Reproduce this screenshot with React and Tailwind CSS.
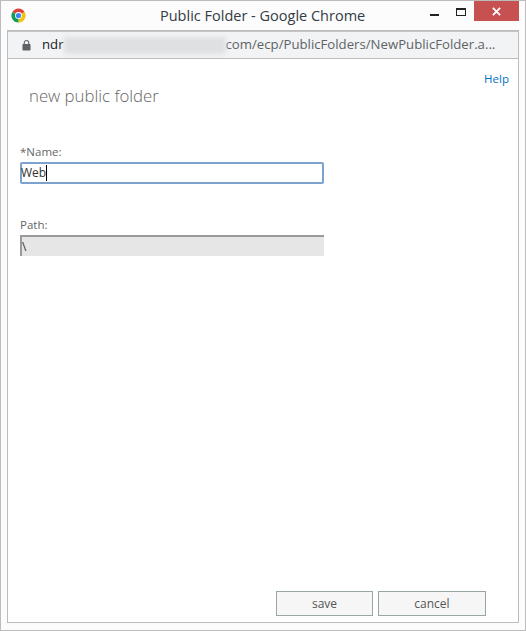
export default function App() {
  return (
    <div className="w-[526px] h-[631px] border border-[#bcbcbc] bg-[#fcfcfc] flex flex-col font-['Open_Sans',sans-serif] overflow-hidden">
      {/* title bar */}
      <div className="h-[29px] flex items-start shrink-0">
        <svg viewBox="0 0 16 16" className="w-[15px] h-[15px] ml-[10px] mt-[7px] shrink-0">
          <path d="M8 8 L1.5 4.2 A7.5 7.5 0 0 1 14.5 4.2 Z" fill="#db4437" />
          <path d="M8 8 L14.5 4.2 A7.5 7.5 0 0 1 8 15.5 Z" fill="#f4c20d" />
          <path d="M8 8 L8 15.5 A7.5 7.5 0 0 1 1.5 4.2 Z" fill="#0f9d58" />
          <circle cx="8" cy="8" r="3.7" fill="#ffffff" />
          <circle cx="8" cy="8" r="2.8" fill="#4285f4" />
        </svg>
        <div className="flex-1 text-[14.5px] leading-[20px] mt-[5px] ml-[134px] text-[#333b44] whitespace-nowrap">Public Folder - Google Chrome</div>
        <div className="w-[9px] h-[2px] bg-[#222] mt-[13px] mr-[17px] shrink-0"></div>
        <div className="w-[10px] h-[8px] border border-[#222] border-t-2 mt-[7px] mr-[8px] shrink-0"></div>
        <div className="w-[45px] h-[20px] bg-[#c75050] mr-[6px] flex items-center justify-center shrink-0">
          <svg viewBox="0 0 10 10" className="w-[9px] h-[9px]">
            <path d="M1 1 L9 9 M9 1 L1 9" stroke="#ffffff" strokeWidth="2" />
          </svg>
        </div>
      </div>

      {/* window body */}
      <div className="ml-[6px] mr-[6px] mb-[7px] flex-1 border border-[#bdbdbd] bg-white flex flex-col">
        {/* address bar */}
        <div className="h-[28px] bg-[#f1f3f4] border-b border-[#bdbdbd] border-t border-t-[#c4c4c4] flex items-center shrink-0 text-[13.2px] whitespace-nowrap overflow-hidden">
          <svg viewBox="0 0 10 12" className="w-[9px] h-[12px] ml-[14px] mr-[11px] shrink-0">
            <path d="M2.5 5.5 V3.5 A2.5 2.5 0 0 1 7.5 3.5 V5.5" fill="none" stroke="#5f6368" strokeWidth="1.2" />
            <rect x="0.5" y="5" width="9" height="7" rx="0.8" fill="#5f6368" />
          </svg>
          <span className="text-[#202124]">ndr</span>
          <div className="w-[162px] h-[17px] bg-[#dfe0e2] blur-[2px] shrink-0"></div>
          <span className="text-[#5f6368]">com/ecp/PublicFolders/NewPublicFolder.a...</span>
        </div>

        {/* form */}
        <div className="flex-1 flex flex-col pl-[12px] pr-[9px] pt-[11px] pb-[6px]">
          <a className="self-end text-[11.5px] leading-[17px] text-[#0072c6]">Help</a>
          <div className="ml-[9px] mt-[-2px] text-[16.8px] leading-[22px] font-light text-[#666666]">new public folder</div>

          <label className="mt-[37px] text-[11.5px] leading-[16px] text-[#666666]">*Name:</label>
          <div className="mt-[2px] w-[304px] h-[22px] border-2 border-[#7da2ce] rounded-[2px] flex items-center text-[12px] text-[#333333]">
            <span className="ml-[-1px]">Web</span>
            <span className="w-px h-[16px] bg-black"></span>
          </div>

          <label className="mt-[33px] text-[11.5px] leading-[16px] text-[#666666]">Path:</label>
          <div className="mt-[2px] w-[304px] h-[21px] bg-[#e6e6e6] border-t-2 border-l-2 border-[#9a9a9a] flex items-center text-[12px] text-[#333333]">\</div>

          <div className="mt-auto flex justify-end gap-[5px] pr-[23px]">
            <button className="w-[97px] h-[25px] bg-[#f6f6f6] border border-[#9aa5a5] text-[12px] text-[#555555]">save</button>
            <button className="w-[108px] h-[25px] bg-[#f6f6f6] border border-[#9aa5a5] text-[12px] text-[#555555]">cancel</button>
          </div>
        </div>
      </div>
    </div>
  );
}
